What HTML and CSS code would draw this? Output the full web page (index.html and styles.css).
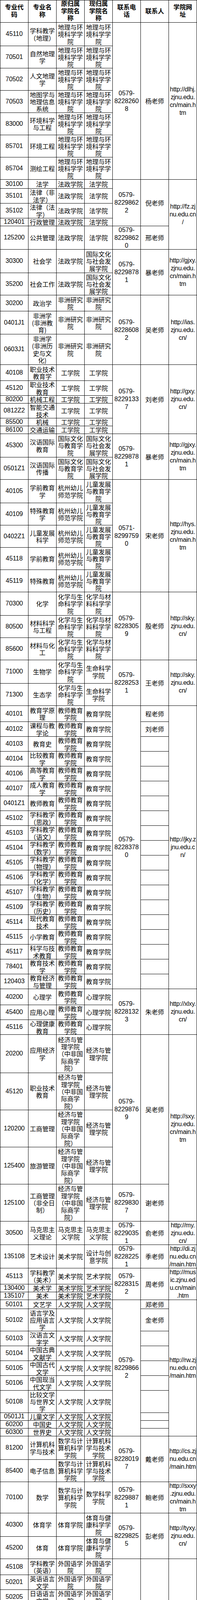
FILE: index.html
```html
<!DOCTYPE html>
<html lang="zh-CN">
<head>
<meta charset="utf-8">
<title>专业联系方式</title>
<link rel="stylesheet" href="styles.css">
</head>
<body>
<div class="page">
<table class="tbl">
<colgroup><col class="c"><col class="c"><col class="c"><col class="c"><col class="c"><col class="c"><col class="c"></colgroup>
<thead>
<tr class="h57"><th>专业代<br>码</th><th>专业名<br>称</th><th>原归属<br>学院名<br>称</th><th>现归属<br>学院名<br>称</th><th>联系电<br>话</th><th>联系人</th><th>学院网<br>址</th></tr>
</thead>
<tbody>
<tr class="h60"><td>45110</td><td>学科教学<br>（地理）</td><td>地理与环<br>境科学学<br>院</td><td>地理与环<br>境科学学<br>院</td><td class="ph" rowspan="7"><div class="ml">0579-<br>8228260<br>8</div></td><td rowspan="7">杨老师</td><td class="url" rowspan="7"><div class="ml">http://dlhj.<br>zjnu.edu.<br>cn/main.h<br>tm</div></td></tr>
<tr class="h57"><td>70501</td><td>自然地理<br>学</td><td>地理与环<br>境科学学<br>院</td><td>地理与环<br>境科学学<br>院</td></tr>
<tr class="h57"><td>70502</td><td>人文地理<br>学</td><td>地理与环<br>境科学学<br>院</td><td>地理与环<br>境科学学<br>院</td></tr>
<tr class="h57"><td>70503</td><td>地图学与<br>地理信息<br>系统</td><td>地理与环<br>境科学学<br>院</td><td>地理与环<br>境科学学<br>院</td></tr>
<tr class="h57"><td>83000</td><td>环境科学<br>与工程</td><td>地理与环<br>境科学学<br>院</td><td>地理与环<br>境科学学<br>院</td></tr>
<tr class="h57"><td>85701</td><td>环境工程</td><td>地理与环<br>境科学学<br>院</td><td>地理与环<br>境科学学<br>院</td></tr>
<tr class="h57"><td>85704</td><td>测绘工程</td><td>地理与环<br>境科学学<br>院</td><td>地理与环<br>境科学学<br>院</td></tr>

<tr class="h23"><td>30100</td><td>法学</td><td>法政学院</td><td>法学院</td><td class="ph" rowspan="4"><div class="ml">0579-<br>8229862<br>2</div></td><td rowspan="4">倪老师</td><td class="url" rowspan="5"><div class="ml">http://fz.zj<br>nu.edu.cn<br>/</div></td></tr>
<tr class="h38"><td>35101</td><td>法律（非<br>法学）</td><td>法政学院</td><td>法学院</td></tr>
<tr class="h38"><td>35102</td><td>法律（法<br>学）</td><td>法政学院</td><td>法学院</td></tr>
<tr class="h20"><td>120401</td><td>行政管理</td><td>法政学院</td><td>法学院</td></tr>
<tr class="h60"><td>125200</td><td>公共管理</td><td>法政学院</td><td>法学院</td><td class="ph"><div class="ml">0579-<br>8229862<br>0</div></td><td>邢老师</td></tr>

<tr class="h60"><td>30300</td><td>社会学</td><td>法政学院</td><td>国际文化<br>与社会发<br>展学院</td><td class="ph" rowspan="2"><div class="ml">0579-<br>8229878<br>1</div></td><td rowspan="2">暴老师</td><td class="url" rowspan="2"><div class="ml">http://gjxy.<br>zjnu.edu.<br>cn/main.h<br>tm</div></td></tr>
<tr class="h57"><td>35200</td><td>社会工作</td><td>法政学院</td><td>国际文化<br>与社会发<br>展学院</td></tr>

<tr class="h41"><td>30200</td><td>政治学</td><td>非洲研究<br>院</td><td>非洲研究<br>院</td><td class="ph" rowspan="3"><div class="ml">0579-<br>8228608<br>2</div></td><td rowspan="3">吴老师</td><td class="url" rowspan="3"><div class="ml">http://ias.<br>zjnu.edu.<br>cn/</div></td></tr>
<tr class="h59"><td>0401J1</td><td>非洲学<br>(非洲教<br>育)</td><td>非洲研究<br>院</td><td>非洲研究<br>院</td></tr>
<tr class="h78"><td>0603J1</td><td>非洲学<br>(非洲历<br>史与文<br>化)</td><td>非洲研究<br>院</td><td>非洲研究<br>院</td></tr>

<tr class="h41"><td>40108</td><td>职业技术<br>教育学</td><td>工学院</td><td>工学院</td><td class="ph" rowspan="6"><div class="ml">0579-<br>8229133<br>7</div></td><td rowspan="6">刘老师</td><td class="url" rowspan="6"><div class="ml">http://gxy.<br>zjnu.edu.<br>cn/</div></td></tr>
<tr class="h38"><td>45120</td><td>职业技术<br>教育</td><td>工学院</td><td>工学院</td></tr>
<tr class="h20"><td>80200</td><td>机械工程</td><td>工学院</td><td>工学院</td></tr>
<tr class="h38"><td>0812Z2</td><td>智能交通<br>技术</td><td>工学院</td><td>工学院</td></tr>
<tr class="h20"><td>85500</td><td>机械</td><td>工学院</td><td>工学院</td></tr>
<tr class="h20"><td>86100</td><td>交通运输</td><td>工学院</td><td>工学院</td></tr>

<tr class="h60"><td>45300</td><td>汉语国际<br>教育</td><td>国际文化<br>与教育学<br>院</td><td>国际文化<br>与社会发<br>展学院</td><td class="ph" rowspan="2"><div class="ml">0579-<br>8229878<br>1</div></td><td rowspan="2">暴老师</td><td class="url" rowspan="2"><div class="ml">http://gjxy.<br>zjnu.edu.<br>cn/main.h<br>tm</div></td></tr>
<tr class="h57"><td>0501Z1</td><td>汉语国际<br>传播</td><td>国际文化<br>与教育学<br>院</td><td>国际文化<br>与社会发<br>展学院</td></tr>

<tr class="h60"><td>40105</td><td>学前教育<br>学</td><td>杭州幼儿<br>师范学院</td><td>儿童发展<br>与教育学<br>院</td><td class="ph" rowspan="5"><div class="ml">0571-<br>8299759<br>0</div></td><td rowspan="5">宋老师</td><td class="url" rowspan="5"><div class="ml">http://hys.<br>zjnu.edu.<br>cn/main.h<br>tm</div></td></tr>
<tr class="h57"><td>40109</td><td>特殊教育<br>学</td><td>杭州幼儿<br>师范学院</td><td>儿童发展<br>与教育学<br>院</td></tr>
<tr class="h57"><td>0402Z1</td><td>儿童发展<br>科学</td><td>杭州幼儿<br>师范学院</td><td>儿童发展<br>与教育学<br>院</td></tr>
<tr class="h57"><td>45118</td><td>学前教育</td><td>杭州幼儿<br>师范学院</td><td>儿童发展<br>与教育学<br>院</td></tr>
<tr class="h57"><td>45119</td><td>特殊教育</td><td>杭州幼儿<br>师范学院</td><td>儿童发展<br>与教育学<br>院</td></tr>

<tr class="h60"><td>70300</td><td>化学</td><td>化学与生<br>命科学学<br>院</td><td>化学与材<br>料科学学<br>院</td><td class="ph" rowspan="3"><div class="ml">0579-<br>8228305<br>9</div></td><td rowspan="3">殷老师</td><td class="url" rowspan="3"><div class="ml">http://sky.<br>zjnu.edu.<br>cn/</div></td></tr>
<tr class="h57"><td>80500</td><td>材料科学<br>与工程</td><td>化学与生<br>命科学学<br>院</td><td>化学与材<br>料科学学<br>院</td></tr>
<tr class="h57"><td>85600</td><td>材料与化<br>工</td><td>化学与生<br>命科学学<br>院</td><td>化学与材<br>料科学学<br>院</td></tr>

<tr class="h60"><td>71000</td><td>生物学</td><td>化学与生<br>命科学学<br>院</td><td>生命科学<br>学院</td><td class="ph" rowspan="2"><div class="ml">0579-<br>8228253<br>1</div></td><td rowspan="2">王老师</td><td class="url" rowspan="2"><div class="ml">http://sky.<br>zjnu.edu.<br>cn/</div></td></tr>
<tr class="h57"><td>71300</td><td>生态学</td><td>化学与生<br>命科学学<br>院</td><td>生命科学<br>学院</td></tr>

<tr class="h41"><td>40101</td><td>教育学原<br>理</td><td>教师教育<br>学院</td><td>教育学院</td><td class="ph" rowspan="19"><div class="ml">0579-<br>8228378<br>0</div></td><td>程老师</td><td class="url" rowspan="19"><div class="ml">http://jky.z<br>jnu.edu.c<br>n/</div></td></tr>
<tr class="h38"><td>40102</td><td>课程与教<br>学论</td><td>教师教育<br>学院</td><td>教育学院</td><td>刘老师</td></tr>
<tr class="h38"><td>40103</td><td>教育史</td><td>教师教育<br>学院</td><td>教育学院</td><td></td></tr>
<tr class="h38"><td>40104</td><td>比较教育<br>学</td><td>教师教育<br>学院</td><td>教育学院</td><td></td></tr>
<tr class="h38"><td>40106</td><td>高等教育<br>学</td><td>教师教育<br>学院</td><td>教育学院</td><td></td></tr>
<tr class="h38"><td>40107</td><td>成人教育<br>学</td><td>教师教育<br>学院</td><td>教育学院</td><td></td></tr>
<tr class="h38"><td>0401Z1</td><td>教师教育</td><td>教师教育<br>学院</td><td>教育学院</td><td></td></tr>
<tr class="h38"><td>45102</td><td>学科教学<br>（思政）</td><td>教师教育<br>学院</td><td>教育学院</td><td></td></tr>
<tr class="h38"><td>45103</td><td>学科教学<br>（语文）</td><td>教师教育<br>学院</td><td>教育学院</td><td></td></tr>
<tr class="h38"><td>45104</td><td>学科教学<br>（数学）</td><td>教师教育<br>学院</td><td>教育学院</td><td></td></tr>
<tr class="h38"><td>45105</td><td>学科教学<br>（物理）</td><td>教师教育<br>学院</td><td>教育学院</td><td></td></tr>
<tr class="h38"><td>45106</td><td>学科教学<br>（化学）</td><td>教师教育<br>学院</td><td>教育学院</td><td></td></tr>
<tr class="h38"><td>45107</td><td>学科教学<br>（生物）</td><td>教师教育<br>学院</td><td>教育学院</td><td></td></tr>
<tr class="h38"><td>45109</td><td>学科教学<br>（历史）</td><td>教师教育<br>学院</td><td>教育学院</td><td></td></tr>
<tr class="h38"><td>45114</td><td>现代教育<br>技术</td><td>教师教育<br>学院</td><td>教育学院</td><td></td></tr>
<tr class="h38"><td>45115</td><td>小学教育</td><td>教师教育<br>学院</td><td>教育学院</td><td></td></tr>
<tr class="h38"><td>45117</td><td>科学与技<br>术教育</td><td>教师教育<br>学院</td><td>教育学院</td><td></td></tr>
<tr class="h38"><td>78401</td><td>教育技术<br>学</td><td>教师教育<br>学院</td><td>教育学院</td><td></td></tr>
<tr class="h38"><td>120403</td><td>教育经济<br>与管理</td><td>教师教育<br>学院</td><td>教育学院</td><td></td></tr>

<tr class="h41"><td>40200</td><td>心理学</td><td>教师教育<br>学院</td><td>心理学院</td><td class="ph" rowspan="3"><div class="ml">0579-<br>8228132<br>3</div></td><td rowspan="3">朱老师</td><td class="url" rowspan="3"><div class="ml">http://xlxy.<br>zjnu.edu.<br>cn/</div></td></tr>
<tr class="h38"><td>45400</td><td>应用心理</td><td>教师教育<br>学院</td><td>心理学院</td></tr>
<tr class="h38"><td>45116</td><td>心理健康<br>教育</td><td>教师教育<br>学院</td><td>心理学院</td></tr>

<tr class="h98"><td>20200</td><td>应用经济<br>学</td><td>经济与管<br>理学院<br>（中非国<br>际商学<br>院）</td><td>经济与管<br>理学院</td><td class="ph" rowspan="4"><div class="ml">0579-<br>8229876<br>9</div></td><td rowspan="4">吴老师</td><td class="url" rowspan="5"><div class="ml">http://sxy.<br>zjnu.edu.<br>cn/main.h<br>tm</div></td></tr>
<tr class="h95"><td>45120</td><td>职业技术<br>教育</td><td>经济与管<br>理学院<br>（中非国<br>际商学<br>院）</td><td>经济与管<br>理学院</td></tr>
<tr class="h95"><td>120200</td><td>工商管理</td><td>经济与管<br>理学院<br>（中非国<br>际商学<br>院）</td><td>经济与管<br>理学院</td></tr>
<tr class="h95"><td>125400</td><td>旅游管理</td><td>经济与管<br>理学院<br>（中非国<br>际商学<br>院）</td><td>经济与管<br>理学院</td></tr>
<tr class="h95"><td>125100</td><td>工商管理<br>（非全日<br>制）</td><td>经济与管<br>理学院<br>（中非国<br>际商学<br>院）</td><td>经济与管<br>理学院</td><td class="ph"><div class="ml">0579-<br>8229830<br>7</div></td><td>谢老师</td></tr>

<tr class="h60"><td>30500</td><td>马克思主<br>义理论</td><td>马克思主<br>义学院</td><td>马克思主<br>义学院</td><td class="ph"><div class="ml">0579-<br>8229035<br>1</div></td><td>俞老师</td><td class="url"><div class="ml">http://my.<br>zjnu.edu.<br>cn/</div></td></tr>
<tr class="h60"><td>135108</td><td>艺术设计</td><td>美术学院</td><td>设计与创<br>意学院</td><td class="ph"><div class="ml">0579-<br>8228225<br>1</div></td><td>季老师</td><td class="url"><div class="ml">http://di.zj<br>nu.edu.cn<br>/main.htm</div></td></tr>

<tr class="h41"><td>45113</td><td>学科教学<br>（美术）</td><td>美术学院</td><td>艺术学院</td><td class="ph" rowspan="3"><div class="ml">0579-<br>8228315<br>2</div></td><td rowspan="3">周老师</td><td class="url" rowspan="3"><div class="ml">http://mus<br>ic.zjnu.ed<br>u.cn/main<br>.htm</div></td></tr>
<tr class="h20"><td>130400</td><td>美术学</td><td>美术学院</td><td>艺术学院</td></tr>
<tr class="h20"><td>135107</td><td>美术</td><td>美术学院</td><td>艺术学院</td></tr>

<tr class="h23"><td>50101</td><td>文艺学</td><td>人文学院</td><td>人文学院</td><td class="ph" rowspan="10"><div class="ml">0579-<br>8229866<br>2</div></td><td>郑老师</td><td class="url" rowspan="10"><div class="ml">http://rw.zj<br>nu.edu.cn<br>/main.htm</div></td></tr>
<tr class="h57"><td>50102</td><td>语言学及<br>应用语言<br>学</td><td>人文学院</td><td>人文学院</td><td>金老师</td></tr>
<tr class="h38"><td>50103</td><td>汉语言文<br>字学</td><td>人文学院</td><td>人文学院</td><td></td></tr>
<tr class="h38"><td>50104</td><td>中国古典<br>文献学</td><td>人文学院</td><td>人文学院</td><td></td></tr>
<tr class="h38"><td>50105</td><td>中国古代<br>文学</td><td>人文学院</td><td>人文学院</td><td></td></tr>
<tr class="h38"><td>50106</td><td>中国现当<br>代文学</td><td>人文学院</td><td>人文学院</td><td></td></tr>
<tr class="h57"><td>50108</td><td>比较文学<br>与世界文<br>学</td><td>人文学院</td><td>人文学院</td><td></td></tr>
<tr class="h20"><td>0501J1</td><td>儿童文学</td><td>人文学院</td><td>人文学院</td><td></td></tr>
<tr class="h20"><td>60200</td><td>中国史</td><td>人文学院</td><td>人文学院</td><td></td></tr>
<tr class="h20"><td>60300</td><td>世界史</td><td>人文学院</td><td>人文学院</td><td></td></tr>

<tr class="h60"><td>81200</td><td>计算机科<br>学与技术</td><td>数学与计<br>算机科学<br>学院</td><td>计算机科<br>学与技术<br>学院</td><td class="ph" rowspan="2"><div class="ml">0579-<br>8228019<br>7</div></td><td rowspan="2">戴老师</td><td class="url" rowspan="2"><div class="ml">http://cs.zj<br>nu.edu.cn<br>/main.htm</div></td></tr>
<tr class="h57"><td>85400</td><td>电子信息</td><td>数学与计<br>算机科学<br>学院</td><td>计算机科<br>学与技术<br>学院</td></tr>

<tr class="h80"><td>70100</td><td>数学</td><td>数学与计<br>算机科学<br>学院</td><td>数学科学<br>学院</td><td class="ph"><div class="ml">0579-<br>8229887<br>1</div></td><td>鲍老师</td><td class="url"><div class="ml">http://sxxy<br>.zjnu.edu.<br>cn/main.h<br>tm</div></td></tr>

<tr class="h60"><td>40300</td><td>体育学</td><td>体育学院</td><td>体育与健<br>康科学学<br>院</td><td class="ph" rowspan="2"><div class="ml">0579-<br>8229825<br>5</div></td><td rowspan="2">彭老师</td><td class="url" rowspan="2"><div class="ml">http://tyxy.<br>zjnu.edu.<br>cn/</div></td></tr>
<tr class="h57"><td>45200</td><td>体育</td><td>体育学院</td><td>体育与健<br>康科学学<br>院</td></tr>

<tr class="h41"><td>45108</td><td>学科教学<br>（英语）</td><td>外国语学<br>院</td><td>外国语学<br>院</td><td class="ph" rowspan="7"><div class="ml">0579-<br>8229818<br>3</div></td><td rowspan="7">余老师</td><td class="url" rowspan="7"><div class="ml">http://flc.zj<br>nu.edu.cn<br>/main.htm</div></td></tr>
<tr class="h38"><td>50201</td><td>英语语言<br>文学</td><td>外国语学<br>院</td><td>外国语学<br>院</td></tr>
<tr class="h38"><td>50205</td><td>日语语言<br>文学</td><td>外国语学<br>院</td><td>外国语学<br>院</td></tr>
<tr class="h57"><td>50211</td><td>外国语言<br>学及应用<br>语言学</td><td>外国语学<br>院</td><td>外国语学<br>院</td></tr>
<tr class="h38"><td>55101</td><td>英语笔译</td><td>外国语学<br>院</td><td>外国语学<br>院</td></tr>
<tr class="h38"><td>55102</td><td>英语口译</td><td>外国语学<br>院</td><td>外国语学<br>院</td></tr>
<tr class="h38"><td>55105</td><td>日语笔译</td><td>外国语学<br>院</td><td>外国语学<br>院</td></tr>

<tr class="h80"><td>30300</td><td>社会学</td><td>文化创意<br>与传播学<br>院</td><td>国际文化<br>与社会发<br>展学院</td><td class="ph"><div class="ml">0579-<br>8229878<br>1</div></td><td>暴老师</td><td class="url"><div class="ml">http://gjxy.<br>zjnu.edu.<br>cn/main.h<br>tm</div></td></tr>
<tr class="h60"><td>130500</td><td>设计学</td><td>文化创意<br>与传播学<br>院</td><td>设计与创<br>意学院</td><td class="ph"><div class="ml">0579-<br>8228225<br>1</div></td><td>季老师</td><td class="url"><div class="ml">http://di.zj<br>nu.edu.cn<br>/main.htm</div></td></tr>

<tr class="h60"><td>130300</td><td>戏剧与影<br>视学</td><td>文化创意<br>与传播学<br>院</td><td>艺术学院</td><td class="ph" rowspan="3"><div class="ml">0579-<br>8228315<br>2</div></td><td rowspan="3">周老师</td><td class="url" rowspan="3"><div class="ml">http://mus<br>ic.zjnu.ed<br>u.cn/main<br>.htm</div></td></tr>
<tr class="h57"><td>135104</td><td>电影</td><td>文化创意<br>与传播学<br>院</td><td>艺术学院</td></tr>
<tr class="h57"><td>135105</td><td>广播电视</td><td>文化创意<br>与传播学<br>院</td><td>艺术学院</td></tr>

<tr class="h60"><td>70200</td><td>物理学</td><td>物理与电<br>子信息工<br>程学院</td><td>物理与电<br>子信息工<br>程学院</td><td class="ph" rowspan="4"><div class="ml">0579-<br>8229829<br>8</div></td><td rowspan="4">吴老师</td><td class="url" rowspan="4"><div class="ml">http://wdx<br>y.zjnu.edu<br>.cn/main.<br>htm</div></td></tr>
<tr class="h57"><td>80300</td><td>光学工程</td><td>物理与电<br>子信息工<br>程学院</td><td>物理与电<br>子信息工<br>程学院</td></tr>
<tr class="h57"><td>85400</td><td>电子信息</td><td>物理与电<br>子信息工<br>程学院</td><td>物理与电<br>子信息工<br>程学院</td></tr>
<tr class="h57"><td>85600</td><td>材料与化<br>工</td><td>物理与电<br>子信息工<br>程学院</td><td>物理与电<br>子信息工<br>程学院</td></tr>

<tr class="h41"><td>45111</td><td>学科教学<br>（音乐）</td><td>音乐学院</td><td>艺术学院</td><td class="ph" rowspan="3"><div class="ml">0579-<br>8228315<br>2</div></td><td rowspan="3">周老师</td><td class="url" rowspan="3"><div class="ml">http://mus<br>ic.zjnu.ed<br>u.cn/main<br>.htm</div></td></tr>
<tr class="h38"><td>130200</td><td>音乐与舞<br>蹈学</td><td>音乐学院</td><td>艺术学院</td></tr>
<tr class="h20 last"><td>135101</td><td>音乐</td><td>音乐学院</td><td>艺术学院</td></tr>
</tbody>
</table>
</div>
</body>
</html>
```

FILE: styles.css
```css
html, body {
  margin: 0;
  padding: 0;
  background: #fff;
}

body {
  font-family: "Noto Sans CJK SC", sans-serif;
  font-size: 16px;
  color: #000;
}

.page {
  width: 505px;
  overflow: clip;
}

.tbl {
  border-collapse: separate;
  border-spacing: 0;
  table-layout: fixed;
  width: 505px;
  border-top: 1px solid #000;
  border-left: 1px solid #000;
}

.tbl .c {
  width: 72px;
}

.tbl th,
.tbl td {
  border-right: 1px solid #000;
  border-bottom: 1px solid #000;
  padding: 0;
  text-align: center;
  vertical-align: middle;
  white-space: nowrap;
  line-height: 18.33px;
  font-weight: normal;
}

.tbl th {
  font-family: "Liberation Sans", "Noto Sans CJK SC", sans-serif;
  font-weight: bold;
  line-height: 18.67px;
}

.tbl tbody td:first-child,
.tbl td.ph,
.tbl td.url {
  font-family: "Liberation Sans", Arial, sans-serif;
}

.tbl td.ph,
.tbl td.url {
  line-height: 20px;
}

.tbl td.url {
  letter-spacing: -0.3px;
}

.tbl tr.last td {
  font-family: "Liberation Sans", "Noto Sans CJK SC", sans-serif;
}

.ml {
  margin: -3px 0;
}

.h20 { height: 20px; }
.h23 { height: 23px; }
.h38 { height: 38px; }
.h41 { height: 41px; }
.h57 { height: 57px; }
.h59 { height: 59px; }
.h60 { height: 60px; }
.h78 { height: 78px; }
.h80 { height: 80px; }
.h95 { height: 95px; }
.h98 { height: 98px; }
```
